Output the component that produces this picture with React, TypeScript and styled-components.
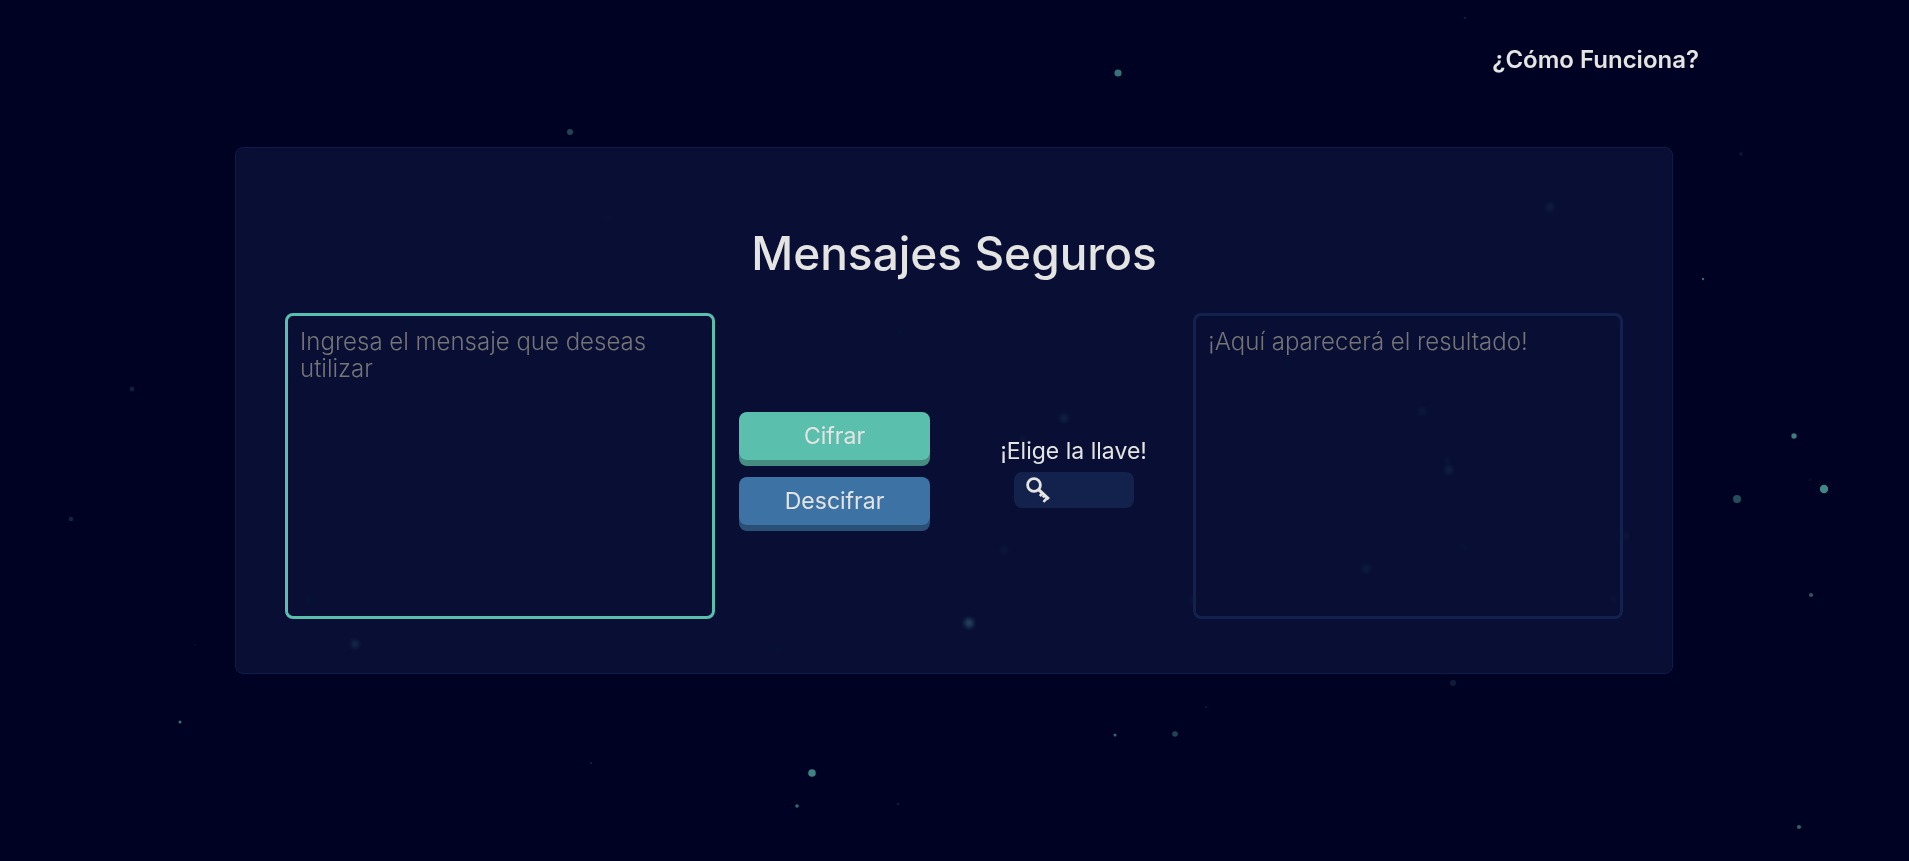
import React, { useState } from "react";
import styled, { createGlobalStyle } from "styled-components";

const GlobalStyle = createGlobalStyle`
  *, *::before, *::after { box-sizing: border-box; }
  body {
    margin: 0;
    background: #000223;
    color: #e4e4e2;
    font-family: Inter, "Liberation Sans", sans-serif;
    font-size: 23px;
  }
`;

const Sky = styled.svg`
  position: fixed;
  inset: 0;
  width: 100%;
  height: 100%;
  fill: #5bbfae;
`;

const Page = styled.div`
  position: relative;
  min-height: 100vh;
`;

const Header = styled.header`
  display: flex;
  justify-content: flex-end;
  padding: 44px 11% 71px;
`;

const NavLink = styled.a`
  color: inherit;
  font-size: 24px;
  font-weight: 600;
  line-height: 32px;
  text-decoration: none;
`;

const Panel = styled.main`
  margin: 0 236px 0 235px;
  padding: 73px 49px 54px;
  border: 1px solid #101c48;
  border-radius: 8px;
  background: rgba(16, 26, 69, 0.5);
  backdrop-filter: blur(2px);
`;

const Title = styled.h1`
  margin: 0 0 27px;
  font-size: 46px;
  font-weight: 500;
  line-height: 65px;
  text-align: center;
`;

const Workspace = styled.form`
  display: flex;
`;

const Field = styled.div`
  flex: 9 1 0;
  min-width: 0;
`;

const Message = styled.textarea<{ $accent: string }>`
  display: block;
  width: 100%;
  height: 306px;
  margin: 0;
  padding: 12px;
  border: 3px solid ${(p) => p.$accent};
  border-radius: 8px;
  outline: none;
  background: transparent;
  color: inherit;
  font: 300 24px/27px Inter, "Liberation Sans", sans-serif;
  resize: none;

  &::placeholder { color: #757575; opacity: 1; }
`;

const Actions = styled.div`
  display: flex;
  flex: 4 1 0;
  flex-direction: column;
  justify-content: center;
  gap: 17px;
  margin: 0 24px;
  padding-top: 4px;
`;

const ActionButton = styled.button<{ $face: string; $edge: string }>`
  height: 48px;
  padding: 0;
  border: 0;
  border-radius: 8px;
  background: ${(p) => p.$face};
  box-shadow: 0 6px 0 ${(p) => p.$edge};
  color: inherit;
  font: 400 23px/32px Inter, "Liberation Sans", sans-serif;
  cursor: pointer;
`;

const KeyPicker = styled.div`
  display: flex;
  flex: 5 1 0;
  flex-direction: column;
  align-items: center;
  justify-content: center;
  gap: 4px;
  padding-top: 10px;
`;

const KeyLabel = styled.label`
  line-height: 33px;
  white-space: nowrap;
`;

const SelectBox = styled.div`
  position: relative;
`;

const KeySelect = styled.select`
  display: block;
  width: 120px;
  height: 36px;
  padding: 0 12px 0 40px;
  border: 0;
  border-radius: 8px;
  appearance: none;
  background: #13224d;
  color: inherit;
  font: 400 23px/32px Inter, "Liberation Sans", sans-serif;
`;

const KeyIcon = styled.svg`
  position: absolute;
  top: 4px;
  left: 11px;
  width: 26px;
  height: 28px;
  fill: none;
  stroke: #e4e4e2;
  pointer-events: none;
`;

/* x, y, radius, opacity */
const stars: [number, number, number, number][] = [
  [1118, 73, 3.6, 0.6],
  [570, 132, 3, 0.35],
  [1465, 18, 1, 0.2],
  [1741, 154, 2, 0.1],
  [1703, 279, 1.2, 0.55],
  [1794, 436, 2.7, 0.65],
  [1824, 489, 4.2, 0.7],
  [1810, 480, 0.8, 0.2],
  [1737, 499, 4, 0.4],
  [1811, 595, 2.1, 0.45],
  [1799, 827, 2.1, 0.5],
  [1453, 683, 3, 0.15],
  [1206, 707, 1.2, 0.12],
  [1175, 734, 2.8, 0.35],
  [1115, 735, 1.5, 0.55],
  [812, 773, 3.8, 0.68],
  [797, 806, 1.8, 0.55],
  [898, 804, 1, 0.2],
  [591, 763, 0.8, 0.35],
  [180, 722, 1.5, 0.6],
  [71, 519, 2.3, 0.2],
  [132, 389, 2.4, 0.17],
  [195, 645, 1, 0.08],
  [355, 644, 4.2, 0.28],
  [310, 600, 3.5, 0.07],
  [969, 623, 4.5, 0.6],
  [1550, 207, 4, 0.18],
  [1064, 418, 4, 0.22],
  [1023, 439, 3, 0.12],
  [1004, 550, 4, 0.1],
  [1422, 411, 4, 0.12],
  [1449, 470, 4, 0.2],
  [1447, 460, 3, 0.1],
  [1366, 569, 4, 0.16],
  [1465, 547, 3, 0.06],
  [1626, 536, 4, 0.08],
  [1193, 600, 4, 0.08],
  [1613, 598, 4, 0.06],
  [900, 333, 3, 0.06],
  [777, 650, 3, 0.06],
  [607, 218, 3, 0.05],
];

export default function App() {
  const [message, setMessage] = useState("");

  return (
    <>
      <GlobalStyle />
      <Sky aria-hidden="true">
        {stars.map(([x, y, r, o]) => (
          <circle key={`${x}-${y}`} cx={x} cy={y} r={r} opacity={o} />
        ))}
      </Sky>
      <Page>
        <Header>
          <NavLink href="#como-funciona">¿Cómo Funciona?</NavLink>
        </Header>
        <Panel>
          <Title>Mensajes Seguros</Title>
          <Workspace onSubmit={(e) => e.preventDefault()}>
            <Field>
              <Message
                $accent="#5bbfae"
                aria-label="Mensaje"
                placeholder="Ingresa el mensaje que deseas utilizar"
                value={message}
                onChange={(e) => setMessage(e.target.value)}
              />
            </Field>
            <Actions>
              <ActionButton type="button" $face="#5bbfae" $edge="#448d80">
                Cifrar
              </ActionButton>
              <ActionButton type="button" $face="#3c72a4" $edge="#2a5075">
                Descifrar
              </ActionButton>
            </Actions>
            <KeyPicker>
              <KeyLabel htmlFor="llave">¡Elige la llave!</KeyLabel>
              <SelectBox>
                <KeySelect id="llave" defaultValue="">
                  <option value="" />
                  <option value="1">1</option>
                  <option value="2">2</option>
                  <option value="3">3</option>
                </KeySelect>
                <KeyIcon viewBox="0 0 26 28" aria-hidden="true">
                  <circle cx="9" cy="9" r="6.4" strokeWidth="2.8" />
                  <path d="M13.4 13.4 L23.8 23.2" strokeWidth="3.2" />
                  <path d="M17.8 17 L14.8 20 M19.6 19.6 L17.8 21.4 M22.4 21.8 L18.4 25.8" strokeWidth="2.6" />
                </KeyIcon>
              </SelectBox>
            </KeyPicker>
            <Field>
              <Message
                $accent="#13224d"
                aria-label="Resultado"
                placeholder="¡Aquí aparecerá el resultado!"
                readOnly
              />
            </Field>
          </Workspace>
        </Panel>
      </Page>
    </>
  );
}
